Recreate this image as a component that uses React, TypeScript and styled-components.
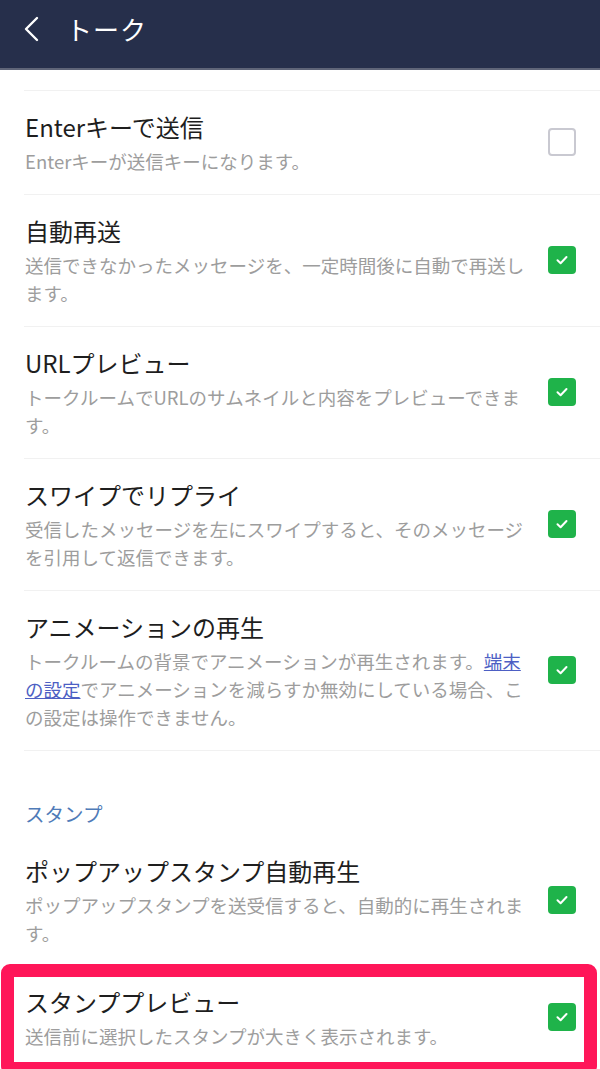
import React from 'react';
import styled, { createGlobalStyle } from 'styled-components';

const GlobalStyle = createGlobalStyle`
  html, body {
    margin: 0;
    padding: 0;
    overflow: hidden;
    background: #ffffff;
  }
  * { box-sizing: border-box; }
`;

const Root = styled.div`
  width: 600px;
  height: 1069px;
  overflow: hidden;
  background: #ffffff;
  font-family: "Noto Sans CJK JP", "Noto Sans", sans-serif;
`;

const Header = styled.header`
  height: 70px;
  background: #262f4b;
  border-bottom: 2px solid #5f6578;
  display: flex;
  align-items: flex-start;
  padding: 11px 0 0 20px;
  gap: 22px;
`;

const BackButton = styled.button`
  width: 24px;
  height: 36px;
  padding: 0;
  border: none;
  background: none;
  display: flex;
  align-items: center;
  justify-content: center;
`;

const Title = styled.h1`
  margin: 0;
  font-size: 26px;
  line-height: 36px;
  font-weight: 400;
  color: #ffffff;
  letter-spacing: 1px;
`;

const List = styled.div`
  padding-left: 24px;
`;

const TopSpacer = styled.div`
  height: 21px;
  border-bottom: 1.5px solid #f1f1f1;
`;

const Row = styled.div<{ $last?: boolean }>`
  position: relative;
  display: flex;
  align-items: center;
  padding: 18px 24px 19px 1px;
  border-bottom: ${(p) => (p.$last ? 'none' : '1.5px solid #f1f1f1')};
`;

const Texts = styled.div`
  width: 510px;
`;

const ItemTitle = styled.div`
  font-size: 24px;
  line-height: 36px;
  color: #1e1e1e;
  margin-bottom: 2px;
`;

const ItemSub = styled.div`
  font-size: 18.5px;
  line-height: 28px;
  color: #9d9d9d;
`;

const Link = styled.a`
  color: #4d5fc4;
  text-decoration: underline;
`;

const Box = styled.div<{ $checked: boolean }>`
  margin-left: auto;
  flex-shrink: 0;
  width: 28px;
  height: 28px;
  border-radius: 4px;
  display: flex;
  align-items: center;
  justify-content: center;
  background: ${(p) => (p.$checked ? '#1fb34a' : '#ffffff')};
  border: ${(p) => (p.$checked ? 'none' : '2.5px solid #c9c9d1')};
`;

const SectionLabel = styled.div`
  padding: 50px 0 8px 1px;
  font-size: 19.5px;
  line-height: 26px;
  color: #4f7bb8;
`;

const Highlight = styled.div`
  position: relative;
  margin-left: -24px;
  padding-left: 24px;

  &::after {
    content: '';
    position: absolute;
    top: -2px;
    left: 1px;
    right: 3px;
    bottom: -6px;
    border: 13px solid #ff1659;
    border-radius: 9px;
    pointer-events: none;
  }
`;

function Check({ checked }: { checked: boolean }) {
  return (
    <Box $checked={checked}>
      {checked && (
        <svg width="14" height="14" viewBox="0 0 14 14">
          <path
            d="M2.5 7.3 L5.6 10.2 L11.5 4"
            fill="none"
            stroke="#ffffff"
            strokeWidth="2"
            strokeLinecap="round"
            strokeLinejoin="round"
          />
        </svg>
      )}
    </Box>
  );
}

type Item = {
  title: string;
  sub: React.ReactNode;
  checked: boolean;
};

const talkItems: Item[] = [
  { title: 'Enterキーで送信', sub: 'Enterキーが送信キーになります。', checked: false },
  {
    title: '自動再送',
    sub: '送信できなかったメッセージを、一定時間後に自動で再送します。',
    checked: true,
  },
  {
    title: 'URLプレビュー',
    sub: 'トークルームでURLのサムネイルと内容をプレビューできます。',
    checked: true,
  },
  {
    title: 'スワイプでリプライ',
    sub: '受信したメッセージを左にスワイプすると、そのメッセージを引用して返信できます。',
    checked: true,
  },
  {
    title: 'アニメーションの再生',
    sub: (
      <>
        トークルームの背景でアニメーションが再生されます。
        <Link>端末の設定</Link>
        でアニメーションを減らすか無効にしている場合、この設定は操作できません。
      </>
    ),
    checked: true,
  },
];

function SettingRow({ item, last }: { item: Item; last?: boolean }) {
  return (
    <Row $last={last}>
      <Texts>
        <ItemTitle>{item.title}</ItemTitle>
        <ItemSub>{item.sub}</ItemSub>
      </Texts>
      <Check checked={item.checked} />
    </Row>
  );
}

export default function App() {
  return (
    <Root>
      <GlobalStyle />
      <Header>
        <BackButton aria-label="戻る">
          <svg width="20" height="26" viewBox="0 0 20 26">
            <path
              d="M15 2 L4 13 L15 24"
              fill="none"
              stroke="#ffffff"
              strokeWidth="2.4"
              strokeLinecap="round"
              strokeLinejoin="round"
            />
          </svg>
        </BackButton>
        <Title>トーク</Title>
      </Header>
      <List>
        <TopSpacer />
        {talkItems.map((item) => (
          <SettingRow key={item.title} item={item} />
        ))}
        <SectionLabel>スタンプ</SectionLabel>
        <SettingRow
          last
          item={{
            title: 'ポップアップスタンプ自動再生',
            sub: 'ポップアップスタンプを送受信すると、自動的に再生されます。',
            checked: true,
          }}
        />
        <Highlight>
          <SettingRow
            last
            item={{
              title: 'スタンププレビュー',
              sub: '送信前に選択したスタンプが大きく表示されます。',
              checked: true,
            }}
          />
        </Highlight>
      </List>
    </Root>
  );
}
